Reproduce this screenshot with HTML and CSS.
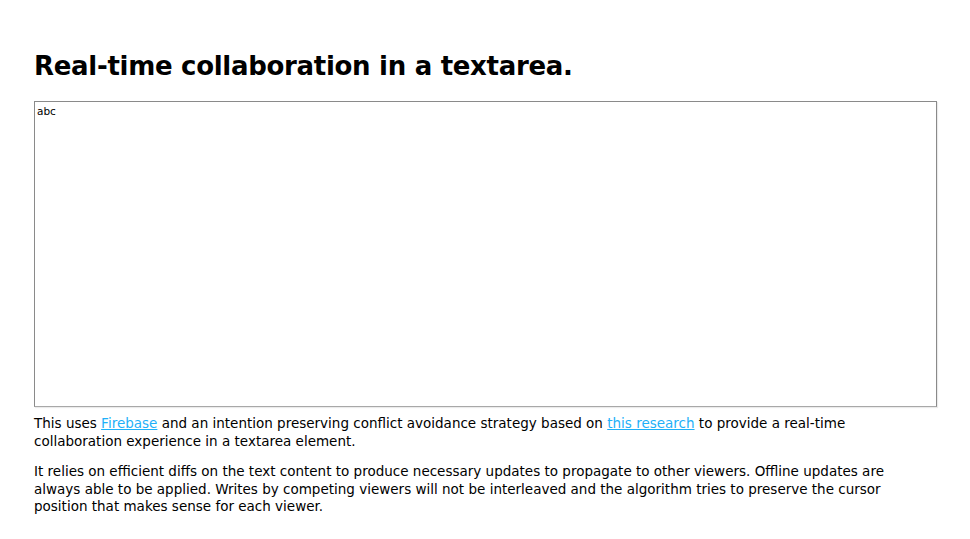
FILE: index.html
```html
<!DOCTYPE html>
<html>
<head>
<meta charset="utf-8">
<link rel="stylesheet" href="styles.css">
</head>
<body>
<div class="page">
  <h1 class="title">Real-time collaboration in a textarea.</h1>
  <textarea class="editor">abc</textarea>
  <p class="desc">This uses <a href="#">Firebase</a> and an intention preserving conflict avoidance strategy based on <a href="#">this research</a> to provide a real-time collaboration experience in a textarea element.</p>
  <p class="desc">It relies on efficient diffs on the text content to produce necessary updates to propagate to other viewers. Offline updates are always able to be applied. Writes by competing viewers will not be interleaved and the algorithm tries to preserve the cursor position that makes sense for each viewer.</p>
</div>
</body>
</html>
```
FILE: styles.css
```css
html, body {
  margin: 0;
  padding: 0;
  background: #fff;
}
.page {
  padding: 0 33px 0 34px;
  font-family: "DejaVu Sans", sans-serif;
  color: #000;
}
.title {
  margin: 0;
  padding-top: 48px;
  font-size: 26px;
  line-height: 37px;
  font-weight: bold;
  letter-spacing: -0.3px;
}
.editor {
  display: block;
  box-sizing: border-box;
  width: 100%;
  height: 306px;
  margin: 16px 0 8px;
  padding: 3px 2px;
  border: 1px solid #8a8a8a;
  border-bottom-color: #a8a8a8;
  box-shadow: 1px 1px 1px rgba(0,0,0,0.08);
  font-family: "DejaVu Sans", sans-serif;
  font-size: 10.5px;
  resize: none;
  outline: none;
}
.desc {
  max-width: 880px;
  margin: 0 0 13px;
  font-size: 13.5px;
  line-height: 17.5px;
}
.desc a {
  color: #1eb0f8;
}
```
